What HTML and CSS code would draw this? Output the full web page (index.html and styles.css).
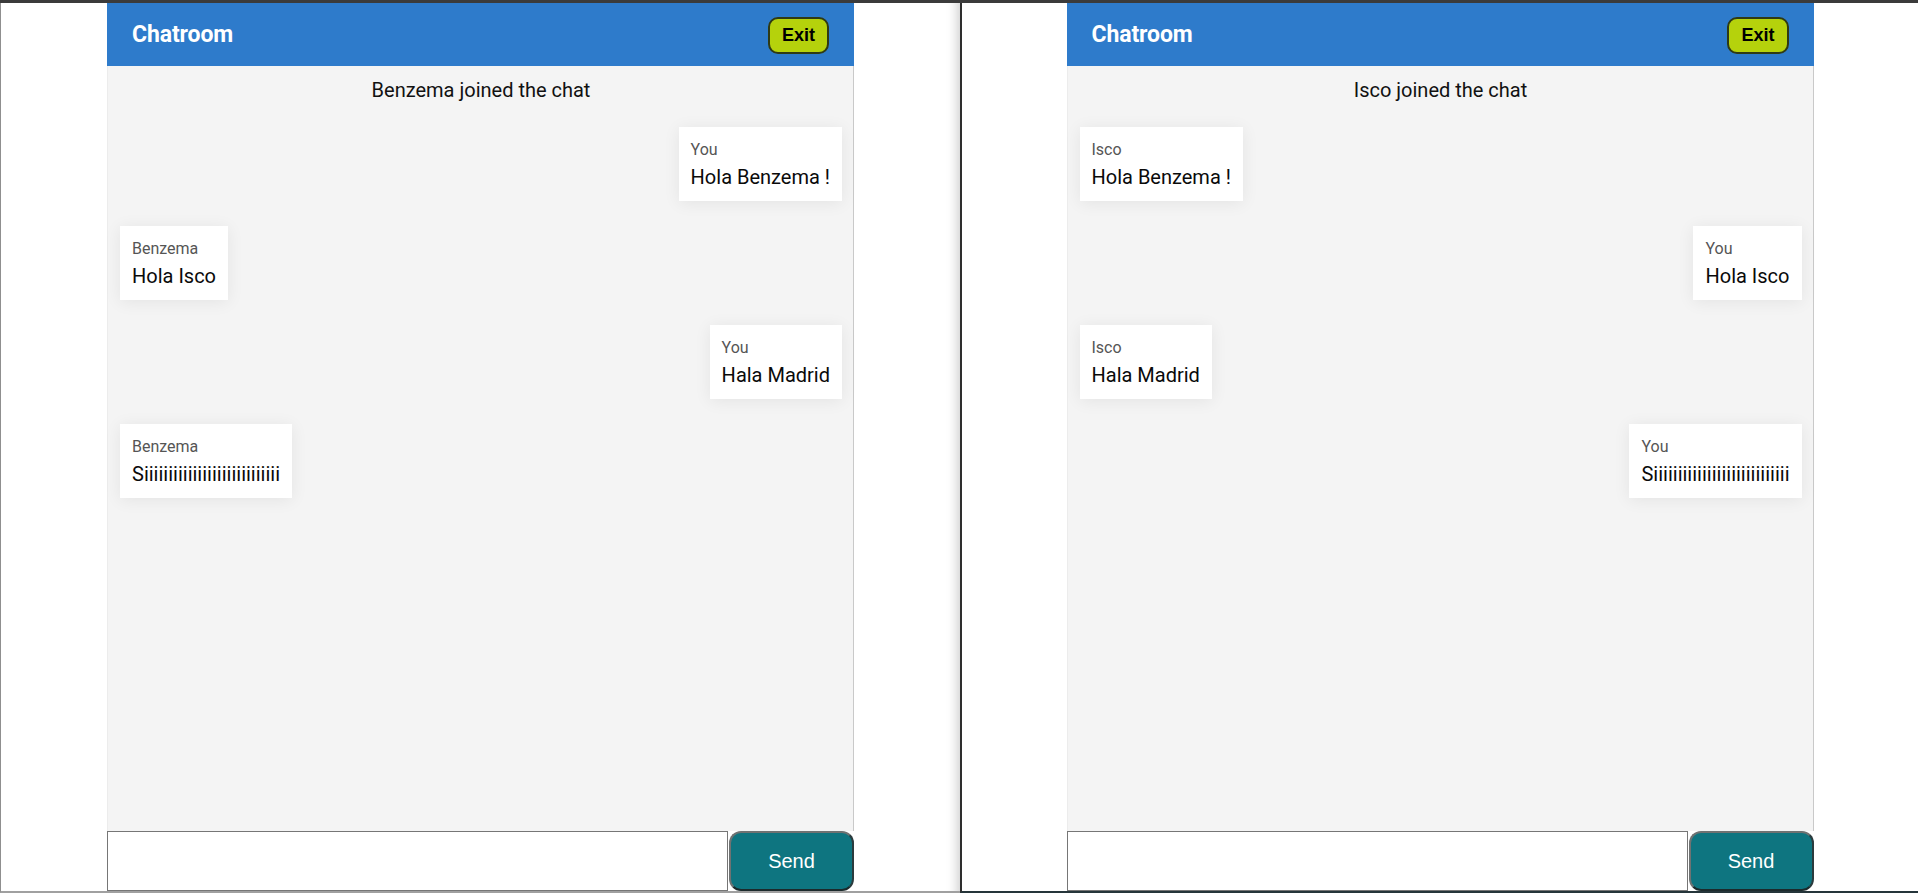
FILE: index.html
```html
<!DOCTYPE html>
<html lang="en">
<head>
<meta charset="utf-8">
<title>Chatroom</title>
<link rel="stylesheet" href="styles.css">
</head>
<body>
<div class="screen">
  <div class="window window-left">
    <div class="chat">
      <header class="chat-header">
        <h1 class="chat-title">Chatroom</h1>
        <button class="exit-btn" type="button">Exit</button>
      </header>
      <div class="messages">
        <p class="notice">Benzema joined the chat</p>
        <div class="msg msg-out"><span class="msg-name">You</span><span class="msg-text">Hola Benzema !</span></div>
        <div class="msg msg-in"><span class="msg-name">Benzema</span><span class="msg-text">Hola Isco</span></div>
        <div class="msg msg-out"><span class="msg-name">You</span><span class="msg-text">Hala Madrid</span></div>
        <div class="msg msg-in"><span class="msg-name">Benzema</span><span class="msg-text">Siiiiiiiiiiiiiiiiiiiiiiiiiiii</span></div>
      </div>
      <form class="composer">
        <input class="composer-input" type="text">
        <button class="send-btn" type="button">Send</button>
      </form>
    </div>
  </div>
  <div class="window window-right">
    <div class="chat">
      <header class="chat-header">
        <h1 class="chat-title">Chatroom</h1>
        <button class="exit-btn" type="button">Exit</button>
      </header>
      <div class="messages">
        <p class="notice">Isco joined the chat</p>
        <div class="msg msg-in"><span class="msg-name">Isco</span><span class="msg-text">Hola Benzema !</span></div>
        <div class="msg msg-out"><span class="msg-name">You</span><span class="msg-text">Hola Isco</span></div>
        <div class="msg msg-in"><span class="msg-name">Isco</span><span class="msg-text">Hala Madrid</span></div>
        <div class="msg msg-out"><span class="msg-name">You</span><span class="msg-text">Siiiiiiiiiiiiiiiiiiiiiiiiiiii</span></div>
      </div>
      <form class="composer">
        <input class="composer-input" type="text">
        <button class="send-btn" type="button">Send</button>
      </form>
    </div>
  </div>
</div>
</body>
</html>
```
FILE: styles.css
```css
* { box-sizing: border-box; }

html, body {
  margin: 0;
  padding: 0;
  background: #ffffff;
  font-family: Roboto, "Liberation Sans", Arial, sans-serif;
  overflow: hidden;
}

.screen {
  display: flex;
  height: 893px;
  border-top: 3px solid #3b3b3b;
}

.window {
  display: flex;
  justify-content: center;
  height: 890px;
  background: #ffffff;
}

.window-left {
  width: 960px;
  border-left: 1px solid #8f8f8f;
  border-bottom: 2px solid #a0a0a0;
  box-shadow: inset -14px 0 12px -12px rgba(0, 0, 0, 0.22);
}

.window-right {
  width: 958px;
  border-left: 2px solid #2e2e2e;
  border-bottom: 2px solid #25353a;
}

.chat {
  width: 747px;
  display: flex;
  flex-direction: column;
  height: 100%;
}

.chat-header {
  height: 63px;
  flex: none;
  display: flex;
  align-items: center;
  justify-content: space-between;
  padding: 0 25px;
  background: #2e7bcb;
}

.chat-title {
  margin: 0;
  color: #ffffff;
  font-size: 23px;
  font-weight: 700;
  letter-spacing: -0.1px;
}

.exit-btn {
  font-family: "Liberation Sans", Arial, sans-serif;
  font-size: 18px;
  font-weight: 700;
  line-height: 19px;
  color: #000000;
  background: #b5d20c;
  border: 2px solid #2f3a14;
  border-radius: 10px;
  padding: 7px 12px;
  margin-top: 1px;
}

.messages {
  flex: 1;
  display: flex;
  flex-direction: column;
  align-items: flex-start;
  gap: 25px;
  padding: 12px 11px 12px 12px;
  background: #f4f4f4;
  border-left: 1px solid #ececec;
  border-right: 1px solid #c9c9c9;
}

.notice {
  align-self: stretch;
  margin: 0;
  text-align: center;
  font-size: 20px;
  line-height: 24px;
  color: #111111;
}

.msg {
  display: flex;
  flex-direction: column;
  padding: 12px;
  background: #ffffff;
  box-shadow: 0 2px 16px rgba(0, 0, 0, 0.07);
}

.msg-out {
  align-self: flex-end;
}

.msg-name {
  font-size: 16px;
  line-height: 21px;
  color: #555555;
}

.msg-text {
  margin-top: 5px;
  font-size: 20px;
  line-height: 24px;
  color: #0a0a0a;
}

.composer {
  display: flex;
  height: 60px;
  flex: none;
  margin: 0;
}

.composer-input {
  flex: 1;
  height: 100%;
  margin: 0;
  border: 1px solid #767676;
  background: #ffffff;
}

.send-btn {
  width: 125px;
  height: 60px;
  margin: 0 0 0 1px;
  font-family: "Liberation Sans", Arial, sans-serif;
  font-size: 20px;
  color: #ffffff;
  background: #0e7580;
  border: 2px solid #6f7272;
  border-bottom-color: #1c2a2c;
  border-right-color: #2b3b3d;
  border-radius: 12px;
}
```
